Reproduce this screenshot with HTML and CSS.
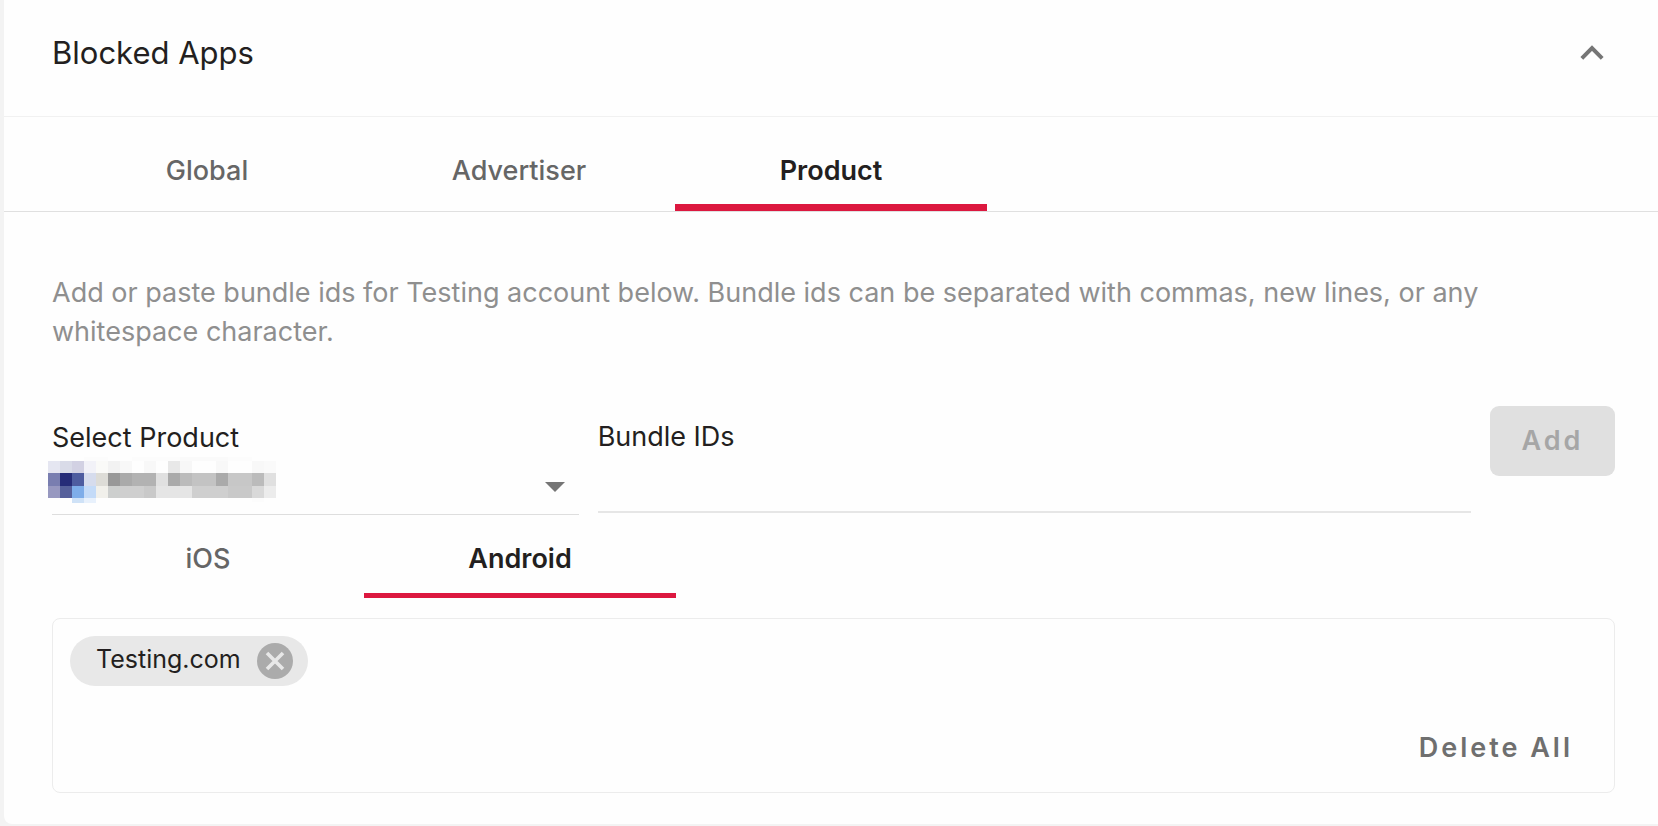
FILE: index.html
```html
<!DOCTYPE html>
<html lang="en">
<head>
<meta charset="utf-8">
<title>Blocked Apps</title>
<link rel="stylesheet" href="styles.css">
</head>
<body>
<main class="panel">
  <header class="panel-header">
    <h1 class="title">Blocked Apps</h1>
    <button class="collapse" type="button" aria-label="Collapse">
      <svg width="24" height="16" viewBox="0 0 24 16"><path d="M1.800 13.400 12 3.200 22.200 13.400" fill="none" stroke="#757575" stroke-width="4"/></svg>
    </button>
  </header>
  <nav class="tabs tabs-main" role="tablist">
    <button class="tab" type="button" role="tab">Global</button>
    <button class="tab" type="button" role="tab">Advertiser</button>
    <button class="tab active" type="button" role="tab" aria-selected="true">Product</button>
  </nav>
  <section class="content">
    <p class="description">Add or paste bundle ids for Testing account below. Bundle ids can be separated with commas, new lines, or any whitespace character.</p>
    <form class="form-row">
      <div class="field product-field">
        <label for="product">Select Product</label>
        <div class="select-wrap">
          <select id="product"><option></option></select>
          <svg class="masked" width="240" height="46" viewBox="0 0 240 46" shape-rendering="crispEdges" aria-hidden="true">
            <path fill="#fcfcfc" d="M36 0h24v4H36zM84 0h48v4H84zM180 0h24v4h-24zM204 41h12v4h-12z"/>
            <path fill="#fafafa" d="M132 0h48v4h-48z"/>
            <path fill="#e5e6f1" d="M0 4h12v12H0z"/><path fill="#d9dbe8" d="M12 4h12v12H12z"/><path fill="#d2d1e3" d="M24 4h12v12H24z"/><path fill="#f2f2f8" d="M36 4h12v12H36z"/><path fill="#fafaf8" d="M48 4h12v12H48z"/><path fill="#f2f2f2" d="M60 4h12v12H60z"/><path fill="#f8f8f8" d="M72 4h12v12H72zM96 4h12v12H96zM168 4h12v12h-12zM204 4h12v12h-12z"/><path fill="#e8e8e8" d="M120 4h12v12h-12z"/><path fill="#f7f7f7" d="M132 4h12v12h-12z"/><path fill="#fafafa" d="M216 4h12v12h-12z"/>
            <path fill="#797eb0" d="M0 16h12v13H0z"/><path fill="#262c78" d="M12 16h12v13H12z"/><path fill="#4e5c9f" d="M24 16h12v13H24z"/><path fill="#d6dced" d="M36 16h12v13H36z"/><path fill="#dddcd7" d="M48 16h12v13H48z"/><path fill="#989898" d="M60 16h12v13H60z"/><path fill="#aaa" d="M72 16h12v13H72zM120 16h12v13h-12zM168 16h12v13h-12z"/><path fill="#b2b2b2" d="M84 16h24v13H84z"/><path fill="#e0e0e0" d="M108 16h12v13h-12zM216 16h12v13h-12z"/><path fill="#bbb" d="M132 16h12v13h-12zM204 16h12v13h-12z"/><path fill="#c3c3c3" d="M144 16h24v13h-24z"/><path fill="#c7c7c7" d="M180 16h24v13h-24z"/>
            <path fill="#9798c0" d="M0 29h12v12H0z"/><path fill="#56609b" d="M12 29h12v12H12z"/><path fill="#7eade9" d="M24 29h12v12H24z"/><path fill="#c4dbf8" d="M36 29h12v12H36z"/><path fill="#f1f0eb" d="M48 29h12v12H48z"/><path fill="#cdcfce" d="M60 29h12v12H60z"/><path fill="#cfcfcf" d="M72 29h24v12H72zM144 29h36v12h-36z"/><path fill="#c9c9c9" d="M96 29h12v12H96zM180 29h24v12h-24z"/><path fill="#e5e5e5" d="M108 29h36v12h-36z"/><path fill="#d9d9d9" d="M204 29h12v12h-12z"/><path fill="#ececec" d="M216 29h12v12h-12z"/>
            <path fill="#cfe2f7" d="M24 41h12v5H24z"/><path fill="#e8f1fc" d="M36 41h12v5H36z"/>
          </svg>
          <svg class="arrow" width="20" height="10" viewBox="0 0 20 10" aria-hidden="true"><path d="M0 0h20L10 10z" fill="#757575"/></svg>
        </div>
      </div>
      <div class="field bundle-field">
        <label for="bundles">Bundle IDs</label>
        <input id="bundles" type="text">
      </div>
      <button class="add" type="button" disabled>Add</button>
    </form>
    <div class="tabs tabs-platform" role="tablist">
      <button class="tab" type="button" role="tab">iOS</button>
      <button class="tab active" type="button" role="tab" aria-selected="true">Android</button>
    </div>
    <div class="bundle-box">
      <div class="chip">
        <span class="chip-label">Testing.com</span>
        <button class="remove" type="button" aria-label="Remove Testing.com">
          <svg width="36" height="36" viewBox="0 0 36 36"><circle cx="18" cy="18" r="18" fill="#ababab"/><path d="M10 10l16 16M26 10l-16 16" stroke="#e8e8e8" stroke-width="3.600"/></svg>
        </button>
      </div>
      <button class="delete-all" type="button">Delete All</button>
    </div>
  </section>
</main>
</body>
</html>
```
FILE: styles.css
```css
* { box-sizing: border-box; }

body {
  margin: 0;
  background: #f3f3f3;
  color: #231f20;
  font: 27px/40px Inter, "Liberation Sans", sans-serif;
}

button, input, select {
  margin: 0;
  padding: 0;
  border: 0;
  background: none;
  color: inherit;
  font: inherit;
}

svg { display: block; }

.panel {
  margin: 0 0 2px 4px;
  background: #fefefe;
  border-bottom-left-radius: 8px;
}

.panel-header {
  display: flex;
  justify-content: space-between;
  align-items: center;
  padding: 33px 54px 43px 48px;
  border-bottom: 1px solid #f1f1f1;
}

.title {
  margin: 0;
  font-size: 31px;
  font-weight: 400;
}

.tabs { display: flex; }

.tabs-main {
  padding-left: 47px;
  border-bottom: 1px solid #e0e0e0;
}

.tab {
  width: 312px;
  padding: 34px 0 13px;
  border-bottom: 7px solid transparent;
  color: #666;
  font-weight: 500;
}

.tab.active {
  border-bottom-color: #dc183f;
  color: #231f20;
  font-weight: 600;
}

.content { padding: 61px 43px 31px 48px; }

.description {
  margin: 0 0 55px;
  color: #8f8f8f;
  line-height: 39px;
}

.form-row {
  display: flex;
  align-items: flex-start;
  gap: 19px;
}

.field {
  display: flex;
  flex-direction: column;
  padding-top: 11px;
}

.product-field { flex: 527; padding-top: 12px; }
.bundle-field { flex: 874; }

.select-wrap { position: relative; }

.select-wrap select {
  display: block;
  width: 100%;
  height: 57px;
  appearance: none;
  border-bottom: 1px solid #dedede;
}

.masked {
  position: absolute;
  top: -1px;
  left: -4px;
  pointer-events: none;
}

.arrow {
  position: absolute;
  top: 24px;
  right: 14px;
  pointer-events: none;
}

.bundle-field input {
  width: 100%;
  height: 56px;
  border-bottom: 2px solid #e6e6e6;
}

.add {
  width: 125px;
  height: 70px;
  border-radius: 9px;
  background: #e0e0e0;
  color: #a6a6a6;
  font-weight: 600;
  letter-spacing: 3px;
}

.tabs-platform .tab {
  padding: 24px 0 14px;
  border-bottom-width: 5px;
}

.bundle-box {
  display: flex;
  flex-direction: column;
  align-items: flex-start;
  gap: 42px;
  margin-top: 20px;
  padding: 17px 41px 24px 17px;
  border: 1px solid #ececec;
  border-radius: 8px;
}

.chip {
  display: flex;
  align-items: center;
  gap: 16px;
  height: 50px;
  padding: 0 15px 0 26px;
  border-radius: 25px;
  background: #e8e8e8;
  font-size: 25px;
}

.chip-label { padding-bottom: 4px; }

.delete-all {
  align-self: flex-end;
  color: #6f6f6f;
  font-weight: 600;
  letter-spacing: 3px;
}
```
